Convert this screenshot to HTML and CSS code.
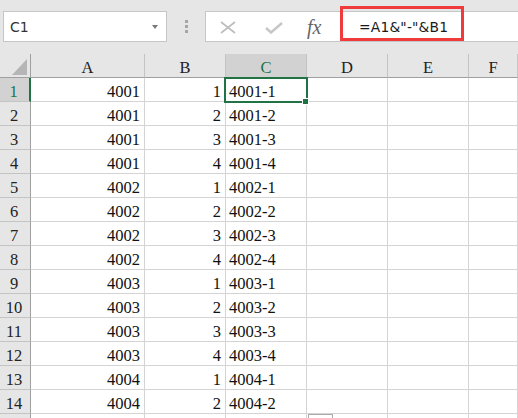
FILE: index.html
```html
<!DOCTYPE html>
<html>
<head>
<meta charset="utf-8">
<link rel="stylesheet" href="styles.css">
</head>
<body>
<div class="toolbar">
  <div class="namebox"><span class="ref">C1</span><span class="arrow"></span></div>
  <div class="dots"><span></span><span></span><span></span></div>
  <div class="fxbar">
    <svg class="ic-x" width="16" height="13" viewBox="0 0 16 13"><path d="M1 1 L15 12 M15 1 L1 12" stroke="#bdbdbd" stroke-width="1.6" fill="none"/></svg>
    <svg class="ic-ok" width="18" height="12" viewBox="0 0 18 12"><path d="M1 6 L6 10.5 L17 1" stroke="#c6c6c6" stroke-width="2.4" fill="none"/></svg>
    <span class="fx">fx</span>
  </div>
  <div class="formula"><span class="ftext">=A1&amp;"-"&amp;B1</span><span class="hl"></span></div>
</div>
<div class="grid">
  <div class="corner"><svg width="30" height="23" viewBox="0 0 30 23"><polygon points="27,5 27,21 12,21" fill="#b5b5b5"/></svg></div>
  <div class="ch">A</div><div class="ch">B</div><div class="ch sel-col">C</div><div class="ch">D</div><div class="ch">E</div><div class="ch">F</div>

  <div class="rh sel-row">1</div><div class="num">4001</div><div class="num">1</div><div class="txt active">4001-1</div><div></div><div></div><div></div>
  <div class="rh">2</div><div class="num">4001</div><div class="num">2</div><div class="txt">4001-2</div><div></div><div></div><div></div>
  <div class="rh">3</div><div class="num">4001</div><div class="num">3</div><div class="txt">4001-3</div><div></div><div></div><div></div>
  <div class="rh">4</div><div class="num">4001</div><div class="num">4</div><div class="txt">4001-4</div><div></div><div></div><div></div>
  <div class="rh">5</div><div class="num">4002</div><div class="num">1</div><div class="txt">4002-1</div><div></div><div></div><div></div>
  <div class="rh">6</div><div class="num">4002</div><div class="num">2</div><div class="txt">4002-2</div><div></div><div></div><div></div>
  <div class="rh">7</div><div class="num">4002</div><div class="num">3</div><div class="txt">4002-3</div><div></div><div></div><div></div>
  <div class="rh">8</div><div class="num">4002</div><div class="num">4</div><div class="txt">4002-4</div><div></div><div></div><div></div>
  <div class="rh">9</div><div class="num">4003</div><div class="num">1</div><div class="txt">4003-1</div><div></div><div></div><div></div>
  <div class="rh">10</div><div class="num">4003</div><div class="num">2</div><div class="txt">4003-2</div><div></div><div></div><div></div>
  <div class="rh">11</div><div class="num">4003</div><div class="num">3</div><div class="txt">4003-3</div><div></div><div></div><div></div>
  <div class="rh">12</div><div class="num">4003</div><div class="num">4</div><div class="txt">4003-4</div><div></div><div></div><div></div>
  <div class="rh">13</div><div class="num">4004</div><div class="num">1</div><div class="txt">4004-1</div><div></div><div></div><div></div>
  <div class="rh">14</div><div class="num">4004</div><div class="num">2</div><div class="txt">4004-2</div><div></div><div></div><div></div>
  <div class="rh"></div><div></div><div></div><div></div><div></div><div></div><div></div>
</div>
<div class="paste"></div>
</body>
</html>
```

FILE: styles.css
```css
body {
  margin: 0;
  width: 518px;
  height: 418px;
  overflow: hidden;
  background: #fff;
  position: relative;
  font-family: "Liberation Serif", serif;
}

.toolbar {
  height: 54px;
  box-sizing: border-box;
  background: #e6e6e6;
  display: flex;
  align-items: flex-start;
  padding-top: 11px;
}

.namebox {
  margin-left: 3px;
  width: 164px;
  height: 31px;
  box-sizing: border-box;
  background: #fff;
  border: 1px solid #c6c6c6;
  display: flex;
  align-items: center;
  padding-left: 6px;
  padding-top: 1px;
  font-family: "DejaVu Sans", sans-serif;
  font-size: 14px;
  color: #333;
}

.arrow {
  margin-left: auto;
  margin-right: 8px;
  width: 0;
  height: 0;
  border-left: 3px solid transparent;
  border-right: 3px solid transparent;
  border-top: 4px solid #7a7a7a;
}

.dots {
  margin-left: 18px;
  margin-top: 9px;
  display: flex;
  flex-direction: column;
  gap: 2px;
}

.dots span {
  width: 3px;
  height: 3px;
  background: #a6a6a6;
}

.fxbar {
  margin-left: 17px;
  width: 136px;
  height: 31px;
  box-sizing: border-box;
  background: #fff;
  border: 1px solid #c6c6c6;
  border-right: none;
  display: flex;
  align-items: center;
}

.ic-x { margin-left: 14px; margin-top: 1px; }
.ic-ok { margin-left: 29px; margin-top: 2px; }

.fx {
  margin-left: 24px;
  font-family: "Liberation Serif", serif;
  font-style: italic;
  font-size: 20px;
  color: #666;
  margin-top: 1px;
}

.formula {
  flex: 1;
  height: 31px;
  box-sizing: border-box;
  background: #fff;
  border: 1px solid #c6c6c6;
  border-right: none;
  position: relative;
  display: flex;
  align-items: center;
  padding-left: 17px;
  padding-top: 1px;
  font-family: "DejaVu Sans", sans-serif;
  font-size: 13.8px;
  letter-spacing: 0.2px;
  color: #1a1a1a;
}

.hl {
  position: absolute;
  left: -2px;
  top: -6px;
  width: 124px;
  height: 35px;
  box-sizing: border-box;
  border: 3px solid #ef3b3b;
}

.grid {
  display: grid;
  grid-template-columns: 31px 114px 81px 81px 81px 81px 1fr;
  grid-auto-rows: 24px;
}

.grid > div {
  box-sizing: border-box;
  border-right: 1px solid #d4d4d4;
  border-bottom: 1px solid #d4d4d4;
  font-size: 16.5px;
  line-height: 18px;
  padding-top: 5px;
  white-space: nowrap;
  overflow: hidden;
  color: #111;
}

.grid > .corner {
  padding: 0;
  background: #e6e6e6;
  border-right-color: #9f9f9f;
  border-bottom-color: #9f9f9f;
}

.corner svg { display: block; }

.grid > .ch {
  background: #e6e6e6;
  border-right-color: #c4c4c4;
  border-bottom-color: #9f9f9f;
  text-align: center;
  color: #222;
}

.grid > .rh {
  background: #e6e6e6;
  border-right-color: #9f9f9f;
  border-bottom-color: #c4c4c4;
  text-align: center;
  padding-right: 2px;
  color: #222;
}

.grid > .sel-col {
  background: #d2d2d2;
  color: #217346;
}

.grid > .sel-row {
  background: #d2d2d2;
  color: #217346;
  border-right: 2px solid #217346;
}

.num {
  text-align: right;
  padding-right: 4px;
}

.txt {
  padding-left: 3px;
}

.grid > .active {
  position: relative;
  overflow: visible;
}

.active::after {
  content: "";
  position: absolute;
  left: -2px;
  top: -1px;
  width: 84px;
  height: 26px;
  box-sizing: border-box;
  border: 2px solid #217346;
  z-index: 1;
}

.active::before {
  content: "";
  position: absolute;
  left: 76px;
  top: 20px;
  width: 5px;
  height: 5px;
  background: #217346;
  border: 1px solid #fff;
  z-index: 2;
}

.paste {
  position: absolute;
  left: 308px;
  top: 414px;
  width: 25px;
  height: 10px;
  box-sizing: border-box;
  border: 1px solid #ababab;
  background: #fff;
}
```
